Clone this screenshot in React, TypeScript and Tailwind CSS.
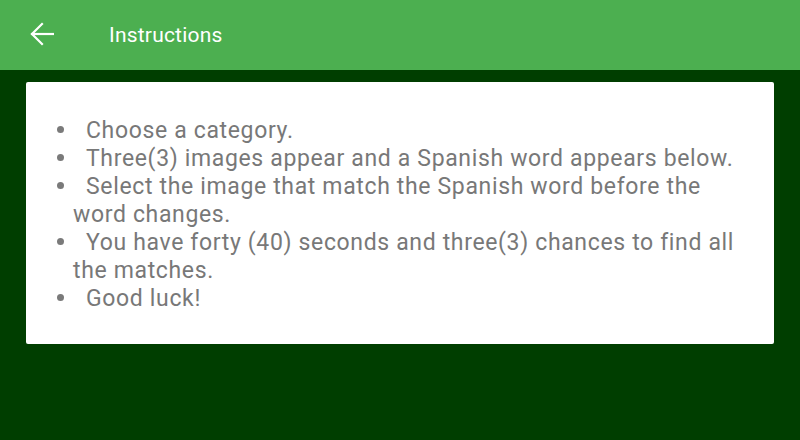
import React from "react";

const items: string[][] = [
  ["Choose a category."],
  ["Three(3) images appear and a Spanish word appears below."],
  ["Select the image that match the Spanish word before the", "word changes."],
  ["You have forty (40) seconds and three(3) chances to find all", "the matches."],
  ["Good luck!"],
];

export default function App() {
  return (
    <div
      className="w-[800px] h-[440px] bg-[#003e00] flex flex-col overflow-hidden"
      style={{ fontFamily: "Roboto, 'Noto Sans', sans-serif" }}
    >
      <div className="h-[70px] bg-[#4caf50] flex items-center shrink-0">
        <svg
          width="24"
          height="24"
          viewBox="0 0 24 24"
          className="ml-[30px] mt-[-3px]"
          fill="none"
          stroke="white"
          strokeWidth="2.2"
          strokeLinecap="square"
        >
          <path d="M23 12H2" />
          <path d="M12 2 L2 12 L12 22" />
        </svg>
        <div className="ml-[55px] text-white text-[21px] tracking-[0.2px] leading-none mt-[1px]">Instructions</div>
      </div>
      <div className="mx-[26px] mt-[12px] h-[262px] bg-white rounded-[2px] pt-[35px] pl-[47px] text-[23px] tracking-[0.65px] leading-[28px] text-[#787878]">
        {items.map((lines, i) => (
          <div key={i}>
            <span className="inline-flex items-center h-[28px] w-[29px] ml-[-16px] align-top">
              <span className="w-[7px] h-[7px] rounded-full bg-[#7a7a7a] mb-[3px]"></span>
            </span>
            {lines[0]}
            {lines.slice(1).map((l, j) => (
              <div key={j}>{l}</div>
            ))}
          </div>
        ))}
      </div>
    </div>
  );
}
